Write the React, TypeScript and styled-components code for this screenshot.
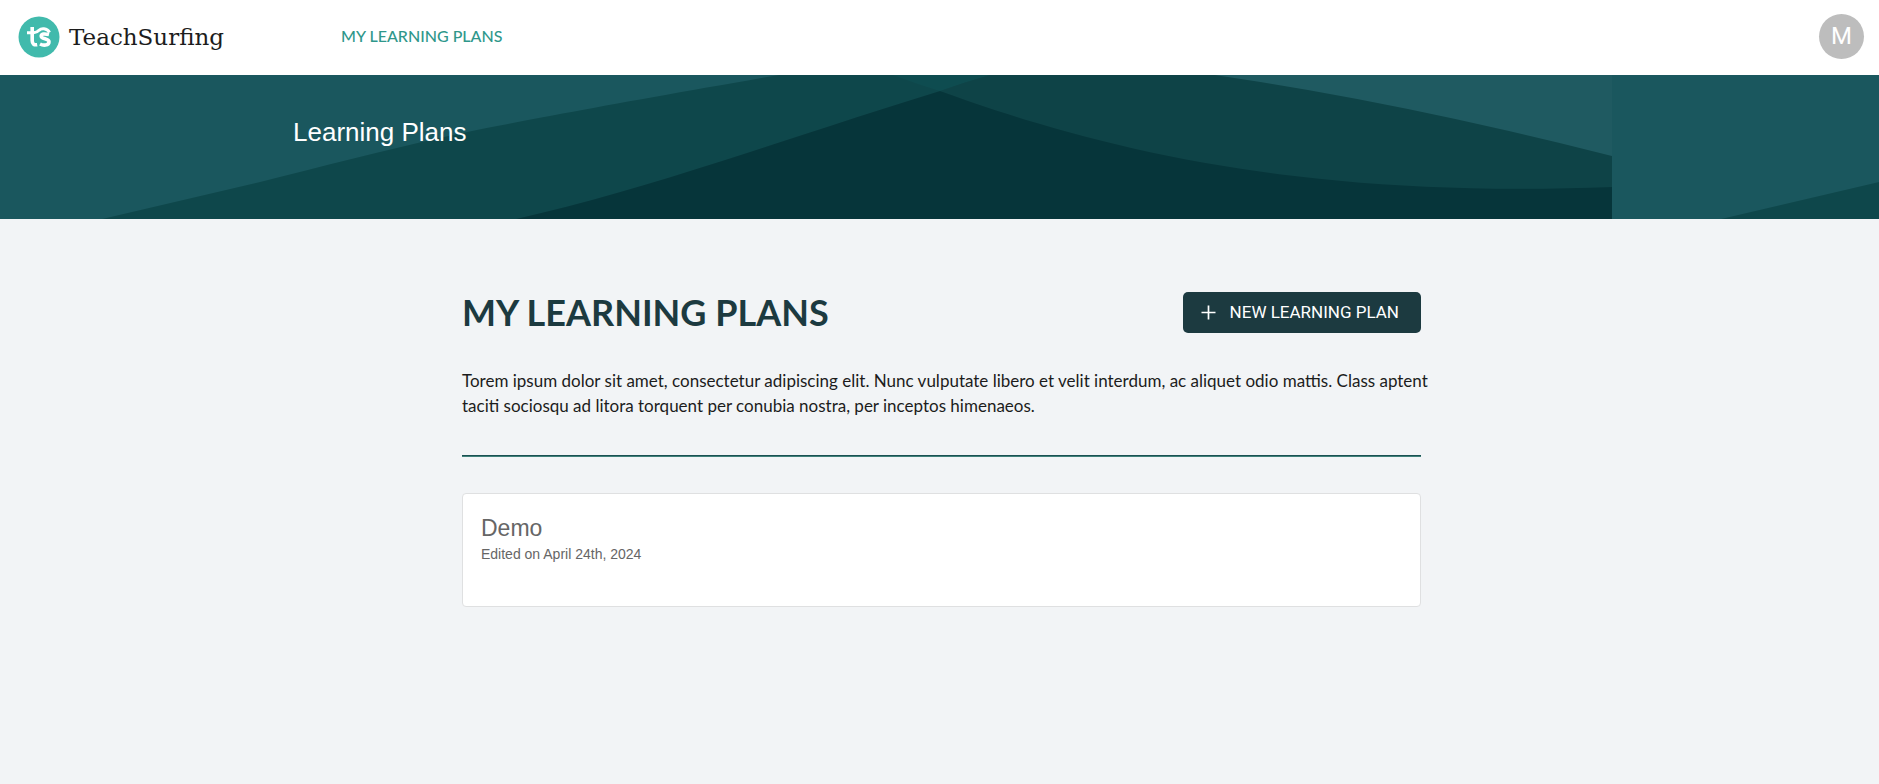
import React from 'react';
import styled, { createGlobalStyle } from 'styled-components';

const sans = '"Liberation Sans", Arial, sans-serif';
const humanist = 'Lato, "Open Sans", sans-serif';

const GlobalStyle = createGlobalStyle`
  *, *::before, *::after { box-sizing: border-box; }
  body {
    margin: 0;
    background: #f2f4f6;
    font-family: ${humanist};
    color: #1c1c1c;
  }
  h1, h2, p { margin: 0; }
`;

const Header = styled.header`
  display: flex;
  align-items: center;
  height: 75px;
  padding: 0 15px 2px 18px;
  background: #fff;
`;

const Brand = styled.a`
  display: flex;
  align-items: center;
  gap: 9px;
  color: #1c1c1c;
  text-decoration: none;
`;

const BrandName = styled.span`
  font: 23px/32px "DejaVu Serif", serif;
`;

const Nav = styled.nav`
  flex: 1;
  margin-left: 117px;
  padding-bottom: 2px;
`;

const NavLink = styled.a`
  font-size: 16px;
  font-weight: 500;
  line-height: 24px;
  color: #2f978b;
  text-decoration: none;
`;

const Avatar = styled.button`
  width: 45px;
  height: 45px;
  padding: 0 0 2px;
  border: 0;
  border-radius: 50%;
  background: #bdbdbd;
  color: #fff;
  font: 24px/32px Roboto, sans-serif;
`;

const Banner = styled.section`
  position: relative;
  height: 144px;
  padding: 40px 24px 0 293px;
  background: #1a575e;
`;

const Waves = styled.svg`
  position: absolute;
  inset: 0;
  width: 100%;
  height: 100%;
`;

const BannerTitle = styled.h2`
  position: relative;
  font: 400 26px/34px ${sans};
  color: #fff;
`;

const Main = styled.main`
  max-width: 963px;
  margin: 0 auto;
  padding: 73px 0 48px 4px;
`;

const TitleRow = styled.div`
  display: flex;
  align-items: center;
  justify-content: space-between;
`;

const Title = styled.h1`
  padding-bottom: 1px;
  font-size: 36px;
  line-height: 40px;
  font-weight: 700;
  color: #1c3a40;
`;

const NewButton = styled.button`
  display: flex;
  align-items: center;
  gap: 14px;
  height: 41px;
  padding: 0 22px 1px 18px;
  border: 0;
  border-radius: 5px;
  background: #1c3a40;
  color: #fff;
  font: 17px/24px Roboto, sans-serif;
`;

const Intro = styled.div`
  margin-top: 35px;
  padding-bottom: 37px;
  border-bottom: 1px solid #1b5052;
  box-shadow: 0 1px #3f8079;
`;

const IntroText = styled.p`
  margin-right: -16px;
  font-size: 17px;
  line-height: 25px;
`;

const PlanCard = styled.article`
  min-height: 114px;
  margin-top: 37px;
  padding: 20px 18px;
  border: 1px solid #dfe0e1;
  border-radius: 4px;
  background: #fff;
  color: #666;
  font-family: ${sans};
`;

const PlanName = styled.h2`
  font-size: 23px;
  line-height: 28px;
  font-weight: 400;
`;

const PlanDate = styled.p`
  font-size: 14px;
  line-height: 24px;
`;

const Logo = () => (
  <svg width="42" height="42" viewBox="0 0 42 42" aria-hidden="true">
    <circle cx="21" cy="21" r="20.5" fill="#41baac" />
    <g fill="none" stroke="#fff" strokeWidth="3.6">
      <path d="M14.2 11v13.500q0 5 5 4.200" />
      <path d="M9 16.800h6.500q3.500-.3 5.500-2.500q2-1.900 5-1.500q4 .6 5.500 3.700" strokeWidth="3" />
      <path d="M31 18.600q-7.500-1.800-7.800 1.400c0 3.400 7.800 2.200 7.800 5.800c0 4-6 3.800-9 2.200" />
    </g>
  </svg>
);

const Plus = () => (
  <svg width="15" height="15" viewBox="0 0 15 15" aria-hidden="true">
    <path d="M7.500 .5v14M.5 7.500h14" stroke="#fff" strokeWidth="1.700" />
  </svg>
);

const BannerWaves = () => (
  <Waves aria-hidden="true">
    <defs>
      <pattern id="waves" x="-7" width="1619" height="144" patternUnits="userSpaceOnUse">
        <rect width="1619" height="144" fill="#1a575e" />
        <g transform="translate(7 0)">
          <path d="M102 144L260 107C320 92 385 75 444 62S617 28 779 0H1612V144Z" fill="#0e474b" />
          <path d="M893 0Q917 9 940 16Q965 7 990 0Z" fill="#0e4c50" />
          <path d="M990 0H1612V144H940V16Q965 7 990 0Z" fill="#0e4347" />
          <path d="M1215 0Q1400 27 1612 81V0Z" fill="#1f5a61" />
          <path d="M516 144C650 114 790 62 940 16C1100 74 1300 124 1612 112V144Z" fill="#06353a" />
        </g>
      </pattern>
    </defs>
    <rect width="100%" height="100%" fill="url(#waves)" />
  </Waves>
);

export default function App() {
  return (
    <>
      <GlobalStyle />
      <Header>
        <Brand href="#">
          <Logo />
          <BrandName>TeachSurfing</BrandName>
        </Brand>
        <Nav>
          <NavLink href="#plans">MY LEARNING PLANS</NavLink>
        </Nav>
        <Avatar type="button">M</Avatar>
      </Header>
      <Banner>
        <BannerWaves />
        <BannerTitle>Learning Plans</BannerTitle>
      </Banner>
      <Main id="plans">
        <TitleRow>
          <Title>MY LEARNING PLANS</Title>
          <NewButton type="button">
            <Plus />
            NEW LEARNING PLAN
          </NewButton>
        </TitleRow>
        <Intro>
          <IntroText>
            Torem ipsum dolor sit amet, consectetur adipiscing elit. Nunc vulputate libero et velit interdum, ac
            aliquet odio mattis. Class aptent taciti sociosqu ad litora torquent per conubia nostra, per inceptos
            himenaeos.
          </IntroText>
        </Intro>
        <PlanCard>
          <PlanName>Demo</PlanName>
          <PlanDate>Edited on April 24th, 2024</PlanDate>
        </PlanCard>
      </Main>
    </>
  );
}
